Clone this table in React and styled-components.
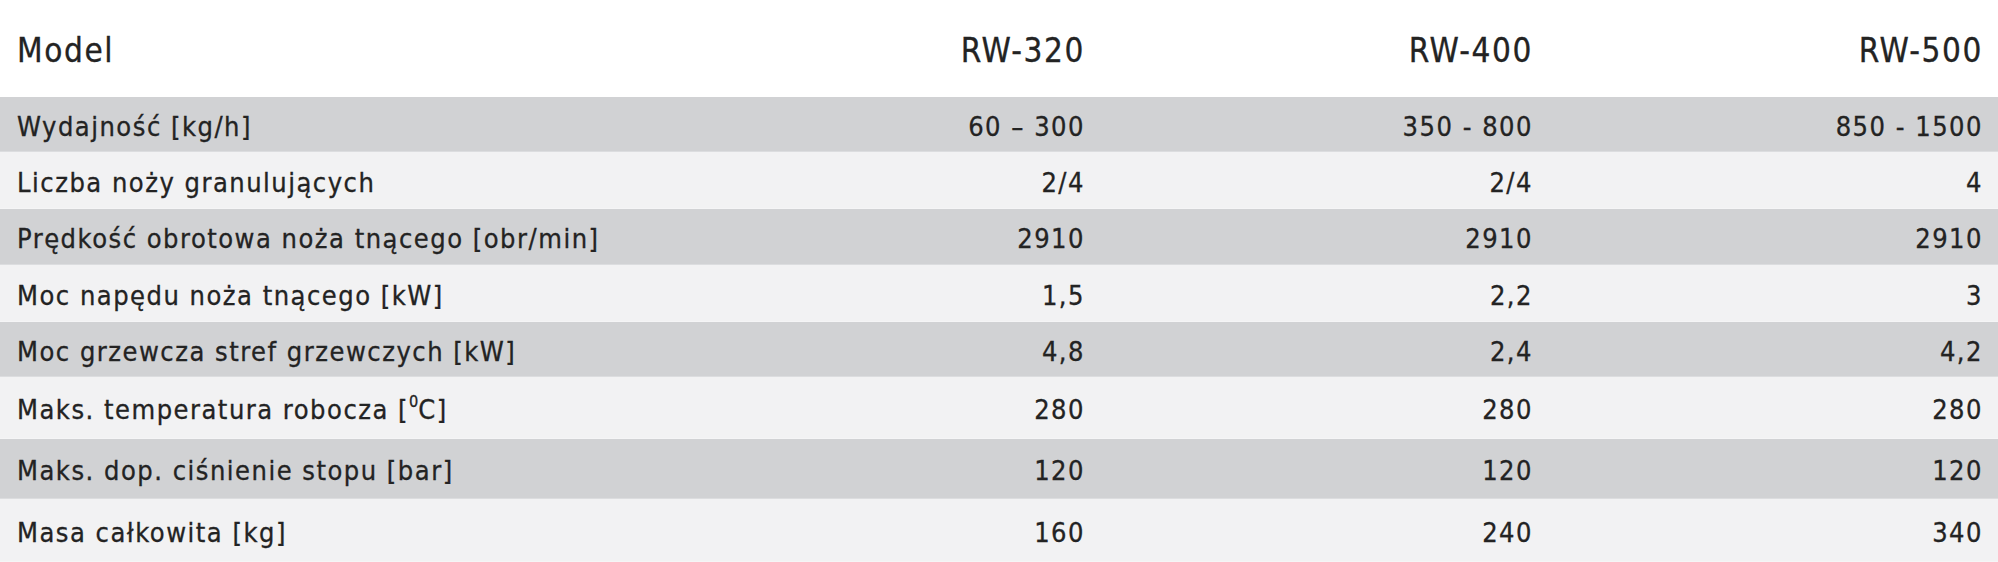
import React from "react";
import styled, { createGlobalStyle } from "styled-components";

const GlobalStyle = createGlobalStyle`
  html, body {
    margin: 0;
    padding: 0;
    background: #ffffff;
  }
  body {
    font-family: "DejaVu Sans Condensed", "Liberation Sans", sans-serif;
    color: #232323;
  }
`;

const models = ["RW-320", "RW-400", "RW-500"];

const rows = [
  { label: "Wydajność [kg/h]", values: ["60 – 300", "350 - 800", "850 - 1500"], h: 55 },
  { label: "Liczba noży granulujących", values: ["2/4", "2/4", "4"], h: 57 },
  { label: "Prędkość obrotowa noża tnącego [obr/min]", values: ["2910", "2910", "2910"], h: 56 },
  { label: "Moc napędu noża tnącego [kW]", values: ["1,5", "2,2", "3"], h: 57 },
  { label: "Moc grzewcza stref grzewczych [kW]", values: ["4,8", "2,4", "4,2"], h: 55 },
  { label: <>Maks. temperatura robocza [<sup>0</sup>C]</>, values: ["280", "280", "280"], h: 62 },
  { label: "Maks. dop. ciśnienie stopu [bar]", values: ["120", "120", "120"], h: 60 },
  { label: "Masa całkowita [kg]", values: ["160", "240", "340"], h: 63 },
];

const SpecTable = () => {
  return (
    <Table>
      <HeadRow>
        <Cell>Model</Cell>
        {models.map((m) => (
          <Cell key={m} $right>
            {m}
          </Cell>
        ))}
      </HeadRow>
      {rows.map((row, i) => (
        <Row key={i} $shade={i % 2 === 0} style={{ height: row.h }}>
          <Cell>{row.label}</Cell>
          {row.values.map((v, j) => (
            <Cell key={j} $right>
              {v}
            </Cell>
          ))}
        </Row>
      ))}
    </Table>
  );
};

export default function App() {
  return (
    <>
      <GlobalStyle />
      <SpecTable />
    </>
  );
}

// Style
const Table = styled.div`
  width: 1998px;
  display: flex;
  flex-direction: column;
`;

const Row = styled.div`
  display: grid;
  grid-template-columns: 1fr 450px 448px 450px;
  align-items: center;
  font-size: 27px;
  letter-spacing: 1.5px;
  -webkit-text-stroke: 0.3px currentColor;
  padding-top: 4px;
  background: ${(p) => (p.$shade ? "#d1d2d4" : "#f2f2f3")};
  border-bottom: 1px solid ${(p) => (p.$shade ? "#dcdddf" : "#f5f5f6")};
  box-sizing: border-box;
`;

const HeadRow = styled(Row)`
  height: 97px;
  font-size: 33px;
  letter-spacing: 1.6px;
  background: #ffffff;
  border-bottom: none;
  padding-top: 3px;
`;

const Cell = styled.div`
  padding: 0 15px 0 17px;
  text-align: ${(p) => (p.$right ? "right" : "left")};
  white-space: nowrap;
  line-height: 1;

  sup {
    font-size: 0.6em;
    line-height: 0;
    vertical-align: 0.75em;
    letter-spacing: 0;
  }
`;
